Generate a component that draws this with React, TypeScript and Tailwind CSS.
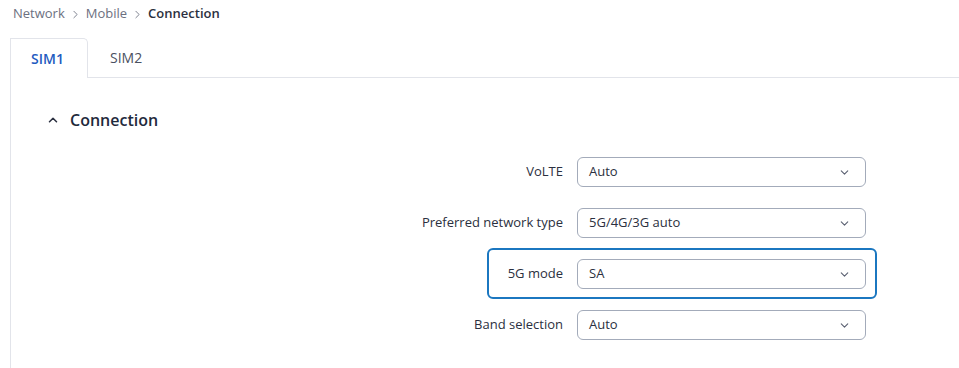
import { ChevronDown, ChevronRight, ChevronUp } from "lucide-react"

const ROWS = [
  { label: "VoLTE", value: "Auto" },
  { label: "Preferred network type", value: "5G/4G/3G auto" },
  { label: "5G mode", value: "SA", active: true },
  { label: "Band selection", value: "Auto" },
]

export default function App() {
  return (
    <div className="h-[368px] w-[959px] overflow-hidden bg-white text-[13px] text-[#2b3040]" style={{ fontFamily: '"Open Sans", "Noto Sans", sans-serif' }}>
      {/* Breadcrumb */}
      <div className="flex h-[27px] items-center gap-[4px] pl-[13px] pt-[1px]">
        <span className="text-[#6c7080]">Network</span>
        <ChevronRight className="h-[13px] w-[13px] text-[#6c7080]" strokeWidth={1.6} />
        <span className="text-[#6c7080]">Mobile</span>
        <ChevronRight className="h-[13px] w-[13px] text-[#6c7080]" strokeWidth={1.6} />
        <span className="font-semibold text-[#2b3040]">Connection</span>
      </div>

      <div className="pl-[10px] pt-[11px]">
        {/* Tabs */}
        <div className="flex">
          <div className="flex h-[40px] w-[78px] items-center justify-center rounded-tr-[5px] border-l border-r border-t border-[#e2e4ea] bg-white pr-[3px] text-[14px] font-semibold text-[#1f5cc0]">
            SIM1
          </div>
          <div className="flex h-[40px] flex-1 items-center border-b border-[#e2e4ea] pl-[22px] text-[14px] text-[#4a5060]">
            SIM2
          </div>
        </div>

        {/* Panel */}
        <div className="h-[300px] border-l border-[#e2e4ea] pr-[82px]">
          <div className="flex h-[68px] items-center gap-[10px] pl-[35px] pt-[16px]">
            <ChevronUp className="h-[14px] w-[14px] text-[#2b3040]" strokeWidth={2.6} />
            <span className="text-[16px] font-semibold text-[#1f2a3c]">Connection</span>
          </div>

          <div className="flex flex-col items-end">
            {ROWS.map(row => (
              <div
                key={row.label}
                className={`flex items-center justify-end gap-[14px] rounded-[6px] border-2 pb-[8px] pl-[9px] pr-[9px] pt-[9px] ${
                  row.active ? "w-[390px] border-[#1b77c0]" : "border-transparent"
                }`}
              >
                <span className="whitespace-nowrap text-[#2b3040]">{row.label}</span>
                <div className="flex h-[30px] w-[289px] items-center justify-between rounded-[6px] border border-[#a3abba] pl-[11px] pr-[14px] text-[#2b3040]">
                  <span>{row.value}</span>
                  <ChevronDown className="h-[13px] w-[13px] text-[#5b6172]" strokeWidth={2} />
                </div>
              </div>
            ))}
          </div>
        </div>
      </div>
    </div>
  )
}
